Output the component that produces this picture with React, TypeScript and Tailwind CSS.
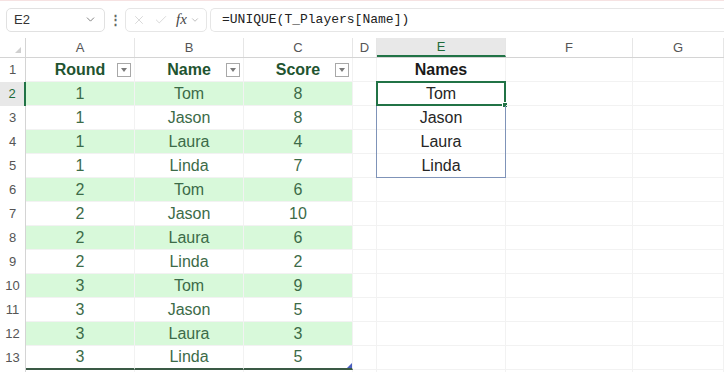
import { ChevronDown, X, Check } from 'lucide-react';

const rows = [
  ['1', 'Tom', '8'],
  ['1', 'Jason', '8'],
  ['1', 'Laura', '4'],
  ['1', 'Linda', '7'],
  ['2', 'Tom', '6'],
  ['2', 'Jason', '10'],
  ['2', 'Laura', '6'],
  ['2', 'Linda', '2'],
  ['3', 'Tom', '9'],
  ['3', 'Jason', '5'],
  ['3', 'Laura', '3'],
  ['3', 'Linda', '5'],
];

const names = ['Tom', 'Jason', 'Laura', 'Linda'];

const cols = [
  { key: 'A', w: 'w-[109px]' },
  { key: 'B', w: 'w-[109px]' },
  { key: 'C', w: 'w-[109px]' },
  { key: 'D', w: 'w-[24px]' },
  { key: 'E', w: 'w-[129px]' },
  { key: 'F', w: 'w-[127px]' },
  { key: 'G', w: 'w-[91px]' },
];

const FilterBtn = () => (
  <div className="absolute right-[3px] top-[5px] w-[14px] h-[14px] border border-[#a8a8a8] bg-white flex items-center justify-center">
    <svg width="6" height="4" viewBox="0 0 6 4">
      <path d="M0 0h6L3 4z" fill="#7a7a7a" />
    </svg>
  </div>
);

export default function App() {
  return (
    <div className="w-[724px] h-[372px] bg-white overflow-hidden border-t border-[#f6e2e2] font-['Liberation_Sans',Arial,sans-serif]">
      {/* formula bar */}
      <div className="h-[37px] flex items-center pl-[6px] gap-[3px]">
        <div className="w-[99px] h-[24px] border border-[#e1e1e1] rounded-[5px] flex items-center justify-between px-[7px]">
          <span className="text-[13px] text-[#333]">E2</span>
          <ChevronDown className="w-[13px] h-[13px] text-[#666]" strokeWidth={1.5} />
        </div>
        <div className="w-[14px] flex justify-center text-[#666] text-[13px] font-bold">⋮</div>
        <div className="w-[82px] h-[24px] border border-[#e6e6e6] rounded-[5px] flex items-center pl-[6px] gap-[8px]">
          <X className="w-[14px] h-[14px] text-[#c8c8c8]" strokeWidth={1.2} />
          <Check className="w-[14px] h-[14px] text-[#c8c8c8]" strokeWidth={1.2} />
          <span className="font-['Liberation_Serif',serif] italic text-[15px] text-[#444] leading-none">fx</span>
          <ChevronDown className="w-[10px] h-[10px] text-[#999] -ml-[5px]" strokeWidth={1.5} />
        </div>
        <div className="flex-1 h-[24px] border border-[#e6e6e6] rounded-l-[5px] border-r-0 flex items-center pl-[11px]">
          <span className="font-['Liberation_Mono',monospace] text-[13px] text-[#222]">=UNIQUE(T_Players[Name])</span>
        </div>
      </div>

      {/* column headers */}
      <div className="flex h-[20px] border-b border-[#d4d4d4]">
        <div className="w-[26px] border-r border-[#d4d4d4] relative">
          <svg className="absolute right-[4px] bottom-[4px]" width="6" height="6" viewBox="0 0 6 6">
            <path d="M6 0v6H0z" fill="#d0d0d0" />
          </svg>
        </div>
        {cols.map((c) => (
          <div
            key={c.key}
            className={`${c.w} shrink-0 flex items-center justify-center text-[13px] border-r border-[#e6e6e6] ${
              c.key === 'E' ? 'bg-[#e8e8e8] text-[#1e6b3a] border-b-2 border-b-[#217346]' : 'text-[#555]'
            }`}
          >
            {c.key}
          </div>
        ))}
      </div>

      {/* rows */}
      {Array.from({ length: 14 }).map((_, i) => {
        const rowNum = i + 1;
        const data = i >= 1 && i <= 12 ? rows[i - 1] : null;
        const band = i >= 1 && i % 2 === 1;
        const isLast = rowNum === 13;
        return (
          <div key={rowNum} className="flex h-[24px]">
            <div
              className={`w-[26px] shrink-0 flex items-center justify-center text-[13px] border-r ${
                rowNum === 2 ? 'bg-[#e8e8e8] text-[#1e6b3a] border-r-2 border-r-[#217346]' : 'text-[#555] border-[#d4d4d4]'
              }`}
            >
              {rowNum <= 13 ? rowNum : ''}
            </div>
            {cols.map((c, ci) => {
              const inTable = ci < 3 && rowNum <= 13;
              let content: React.ReactNode = null;
              let cls = 'text-[16px]';
              if (inTable && rowNum === 1) {
                content = (
                  <>
                    <span className="font-bold text-[#1f5430]">{['Round', 'Name', 'Score'][ci]}</span>
                    <FilterBtn />
                  </>
                );
              } else if (inTable && data) {
                content = data[ci];
                cls += ' text-[#3c6b48]';
              }
              if (c.key === 'E') {
                if (rowNum === 1) {
                  content = <span className="font-bold text-[#1a1a1a]">Names</span>;
                } else if (rowNum >= 2 && rowNum <= 5) {
                  content = names[rowNum - 2];
                  cls += ' text-[#262626]';
                }
              }
              const bg = inTable && band ? 'bg-[#d8f9da]' : '';
              const bottom = inTable && isLast ? 'border-b-2 border-b-[#3a5a45]' : 'border-b border-b-[#f2f2f2]';
              return (
                <div
                  key={c.key}
                  className={`${c.w} shrink-0 relative flex items-center justify-center border-r border-r-[#f2f2f2] ${bottom} ${bg} ${cls}`}
                >
                  {content}
                  {c.key === 'E' && rowNum === 2 && (
                    <div className="absolute -left-px -top-px -right-px -bottom-px border-2 border-[#217346]">
                      <div className="absolute -right-[4px] -bottom-[4px] w-[6px] h-[6px] bg-[#217346] border border-white" />
                    </div>
                  )}
                  {c.key === 'E' && rowNum >= 3 && rowNum <= 5 && (
                    <div
                      className={`absolute -left-px -right-px top-0 -bottom-px border-l border-r border-[#7f93b8] ${
                        rowNum === 5 ? 'border-b' : ''
                      }`}
                    />
                  )}
                  {c.key === 'C' && isLast && (
                    <svg className="absolute right-0 bottom-0" width="5" height="5" viewBox="0 0 5 5">
                      <path d="M5 0v5H0z" fill="#4a5fc0" />
                    </svg>
                  )}
                </div>
              );
            })}
          </div>
        );
      })}
    </div>
  );
}
